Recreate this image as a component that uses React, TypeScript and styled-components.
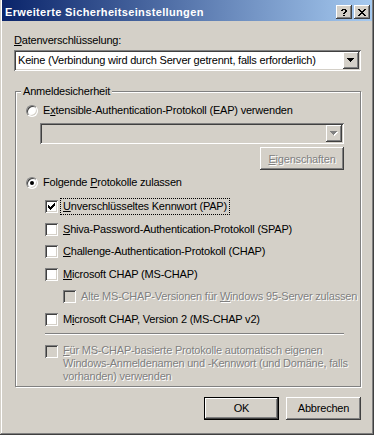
import React from 'react';
import styled, { createGlobalStyle, css } from 'styled-components';

const GlobalStyle = createGlobalStyle`
  html, body {
    margin: 0;
    padding: 0;
    background: #d4d0c8;
  }
  body {
    font-family: "Liberation Sans", Arial, sans-serif;
    font-size: 11px;
    letter-spacing: -0.2px;
    color: #000;
  }
`;

const raised = css`
  box-shadow: inset -1px -1px #404040, inset 1px 1px #fff, inset -2px -2px #808080,
    inset 2px 2px #d4d0c8;
`;

const sunken = css`
  box-shadow: inset 1px 1px #808080, inset -1px -1px #fff, inset 2px 2px #404040,
    inset -2px -2px #d4d0c8;
`;

const disabledText = css`
  color: #808080;
  text-shadow: 1px 1px 0 #fff;
`;

const Window = styled.div`
  box-sizing: border-box;
  width: 374px;
  height: 435px;
  padding: 0 2px 2px 2px;
  background: #d4d0c8;
  display: flex;
  flex-direction: column;
  box-shadow: inset -1px -1px #404040, inset 1px 0 #d4d0c8, inset -2px -2px #808080,
    inset 2px 0 #fff;
`;

const TitleBar = styled.div`
  height: 21px;
  display: flex;
  align-items: flex-start;
  padding: 0 2px 0 3px;
  background: linear-gradient(to right, #0a246a, #a6caf0);
`;

const Title = styled.div`
  flex: 1;
  margin-top: 6px;
  line-height: 13px;
  font-weight: bold;
  letter-spacing: 0.35px;
  color: #fff;
  white-space: nowrap;
`;

const CaptionButtons = styled.div`
  display: flex;
  gap: 2px;
  margin-top: 5px;
`;

const CaptionButton = styled.div`
  width: 16px;
  height: 14px;
  display: flex;
  align-items: center;
  justify-content: center;
  background: #d4d0c8;
  ${raised};
`;

const Body = styled.div`
  flex: 1;
  display: flex;
  flex-direction: column;
  padding: 13px 11px 0 12px;
`;

const FieldLabel = styled.div`
  line-height: 13px;
  margin-bottom: 3px;
`;

const Combo = styled.div<{ $disabled?: boolean; $width?: number }>`
  box-sizing: border-box;
  height: 21px;
  width: ${p => (p.$width ? `${p.$width}px` : 'auto')};
  padding: 2px;
  display: flex;
  align-items: center;
  background: ${p => (p.$disabled ? '#d4d0c8' : '#fff')};
  ${sunken};
`;

const ComboText = styled.div`
  flex: 1;
  padding-left: 2px;
  line-height: 13px;
  white-space: nowrap;
  overflow: hidden;
`;

const DropButton = styled.div`
  width: 16px;
  height: 17px;
  display: flex;
  align-items: center;
  justify-content: center;
  background: #d4d0c8;
  ${raised};
`;

const Group = styled.fieldset`
  margin: 14px 0 0 1px;
  padding: 0 0 3px 0;
  min-width: 0;
  border: 1px solid #808080;
  box-shadow: inset 1px 1px #fff, 1px 1px #fff;
`;

const Legend = styled.legend`
  margin-left: 5px;
  padding: 0 2px;
  line-height: 13px;
  background: #d4d0c8;
`;

const GroupBody = styled.div`
  display: flex;
  flex-direction: column;
  padding: 6px 0 0 10px;
`;

const OptionRow = styled.div<{ $top?: number }>`
  display: flex;
  align-items: center;
  gap: 5px;
  height: 13px;
  margin-top: ${p => p.$top ?? 0}px;
`;

const OptionText = styled.span<{ $disabled?: boolean; $focus?: boolean }>`
  line-height: 13px;
  white-space: nowrap;
  ${p => p.$disabled && disabledText};
  ${p =>
    p.$focus &&
    css`
      outline: 1px dotted #000;
      outline-offset: 1px;
      margin-left: -1px;
      padding: 0 1px;
    `};
`;

const Radio = styled.span<{ $checked?: boolean }>`
  box-sizing: border-box;
  width: 12px;
  height: 12px;
  border-radius: 50%;
  border: 1px solid;
  border-color: #808080 #fff #fff #808080;
  background: #fff;
  box-shadow: inset 1px 1px #404040, inset -1px -1px #d4d0c8;
  display: flex;
  align-items: center;
  justify-content: center;

  &::after {
    content: '';
    width: 4px;
    height: 4px;
    border-radius: 50%;
    background: ${p => (p.$checked ? '#000' : 'transparent')};
  }
`;

const EapBlock = styled.div`
  display: flex;
  flex-direction: column;
  align-items: flex-end;
  align-self: flex-start;
  margin: 6px 0 0 14px;
`;

const PushButton = styled.button<{ $default?: boolean; $width?: number }>`
  box-sizing: border-box;
  width: ${p => p.$width ?? 75}px;
  height: 23px;
  padding: 0;
  font: inherit;
  letter-spacing: inherit;
  color: #000;
  background: #d4d0c8;
  border: ${p => (p.$default ? '1px solid #000' : 'none')};
  ${raised};
  &:disabled {
    ${disabledText};
  }
`;

const CheckList = styled.div`
  display: flex;
  flex-direction: column;
  gap: 9.6px;
  margin: 11px 0 0 19px;
`;

const CheckRow = styled.div<{ $indent?: number }>`
  display: flex;
  align-items: center;
  gap: 5px;
  height: 13px;
  margin-left: ${p => p.$indent ?? 0}px;
`;

const Box = styled.span<{ $disabled?: boolean }>`
  box-sizing: border-box;
  flex: none;
  width: 13px;
  height: 13px;
  display: flex;
  align-items: center;
  justify-content: center;
  background: ${p => (p.$disabled ? '#d4d0c8' : '#fff')};
  ${sunken};
`;

const Separator = styled.div`
  width: 299px;
  height: 0;
  margin: 7px 0 0 19px;
  border-top: 1px solid #808080;
  border-bottom: 1px solid #fff;
`;

const NoteRow = styled.div`
  display: flex;
  align-items: flex-start;
  gap: 5px;
  margin: 10px 0 0 19px;
`;

const NoteText = styled.div`
  line-height: 13px;
  margin-top: -1px;
  ${disabledText};
`;

const Footer = styled.div`
  display: flex;
  justify-content: flex-end;
  gap: 7px;
  margin-top: 10px;
`;

const Arrow = ({ disabled }: { disabled?: boolean }) => (
  <svg width="8" height="5" viewBox="0 0 8 5" shapeRendering="crispEdges">
    {disabled && (
      <path d="M1 1h7v1H1zM2 2h5v1H2zM3 3h3v1H3zM4 4h1v1H4z" fill="#fff" />
    )}
    <path
      d="M0 0h7v1H0zM1 1h5v1H1zM2 2h3v1H2zM3 3h1v1H3z"
      fill={disabled ? '#808080' : '#000'}
    />
  </svg>
);

const CheckMark = () => (
  <svg width="7" height="7" viewBox="0 0 7 7" shapeRendering="crispEdges">
    <path
      d="M6 0h1v1H6zM5 1h2v1H5zM0 2h1v1H0zM4 2h3v1H4zM0 3h2v1H0zM3 3h3v1H3zM0 4h5v1H0zM1 5h3v1H1zM2 6h1v1H2z"
      fill="#000"
    />
  </svg>
);

const HelpGlyph = () => (
  <svg width="6" height="7" viewBox="0 0 6 7" shapeRendering="crispEdges">
    <path d="M1 0h4v1H1zM0 1h2v1H0zM4 1h2v1H4zM4 2h2v1H4zM3 3h2v1H3zM2 4h2v1H2zM2 6h2v1H2z" fill="#000" />
  </svg>
);

const CloseGlyph = () => (
  <svg width="8" height="7" viewBox="0 0 8 7" shapeRendering="crispEdges">
    <path
      d="M0 0h2v1H0zM6 0h2v1H6zM1 1h2v1H1zM5 1h2v1H5zM2 2h4v1H2zM3 3h2v1H3zM2 4h4v1H2zM1 5h2v1H1zM5 5h2v1H5zM0 6h2v1H0zM6 6h2v1H6z"
      fill="#000"
    />
  </svg>
);

type Check = { label: React.ReactNode; checked?: boolean; disabled?: boolean; focus?: boolean; indent?: number };

const checks: Check[] = [
  { label: <><u>U</u>nverschlüsseltes Kennwort (PAP)</>, checked: true, focus: true },
  { label: <><u>S</u>hiva-Password-Authentication-Protokoll (SPAP)</> },
  { label: <><u>C</u>hallenge-Authentication-Protokoll (CHAP)</> },
  { label: <><u>M</u>icrosoft CHAP (MS-CHAP)</> },
  {
    label: <>Alte MS-CHAP-Versionen für <u>W</u>indows 95-Server zulassen</>,
    disabled: true,
    indent: 18,
  },
  { label: <>M<u>i</u>crosoft CHAP, Version 2 (MS-CHAP v2)</> },
];

const App: React.FC = () => {
  return (
    <>
      <GlobalStyle />
      <Window>
        <TitleBar>
          <Title>Erweiterte Sicherheitseinstellungen</Title>
          <CaptionButtons>
            <CaptionButton><HelpGlyph /></CaptionButton>
            <CaptionButton><CloseGlyph /></CaptionButton>
          </CaptionButtons>
        </TitleBar>

        <Body>
          <FieldLabel><u>D</u>atenverschlüsselung:</FieldLabel>
          <Combo>
            <ComboText>Keine (Verbindung wird durch Server getrennt, falls erforderlich)</ComboText>
            <DropButton><Arrow /></DropButton>
          </Combo>

          <Group>
            <Legend>Anmeldesicherheit</Legend>
            <GroupBody>
              <OptionRow>
                <Radio />
                <OptionText>E<u>x</u>tensible-Authentication-Protokoll (EAP) verwenden</OptionText>
              </OptionRow>
              <EapBlock>
                <Combo $disabled $width={304}>
                  <ComboText />
                  <DropButton><Arrow disabled /></DropButton>
                </Combo>
                <PushButton disabled $width={84} style={{ marginTop: 3 }}>
                  <u>E</u>igenschaften
                </PushButton>
              </EapBlock>

              <OptionRow $top={6}>
                <Radio $checked />
                <OptionText>Folgende <u>P</u>rotokolle zulassen</OptionText>
              </OptionRow>

              <CheckList>
                {checks.map((c, i) => (
                  <CheckRow key={i} $indent={c.indent}>
                    <Box $disabled={c.disabled}>{c.checked && <CheckMark />}</Box>
                    <OptionText $disabled={c.disabled} $focus={c.focus}>{c.label}</OptionText>
                  </CheckRow>
                ))}
              </CheckList>

              <Separator />

              <NoteRow>
                <Box $disabled />
                <NoteText>
                  <u>F</u>ür MS-CHAP-basierte Protokolle automatisch eigenen
                  <br />
                  Windows-Anmeldenamen und -Kennwort (und Domäne, falls
                  <br />
                  vorhanden) verwenden
                </NoteText>
              </NoteRow>
            </GroupBody>
          </Group>

          <Footer>
            <PushButton $default>OK</PushButton>
            <PushButton>Abbrechen</PushButton>
          </Footer>
        </Body>
      </Window>
    </>
  );
};

export default App;
